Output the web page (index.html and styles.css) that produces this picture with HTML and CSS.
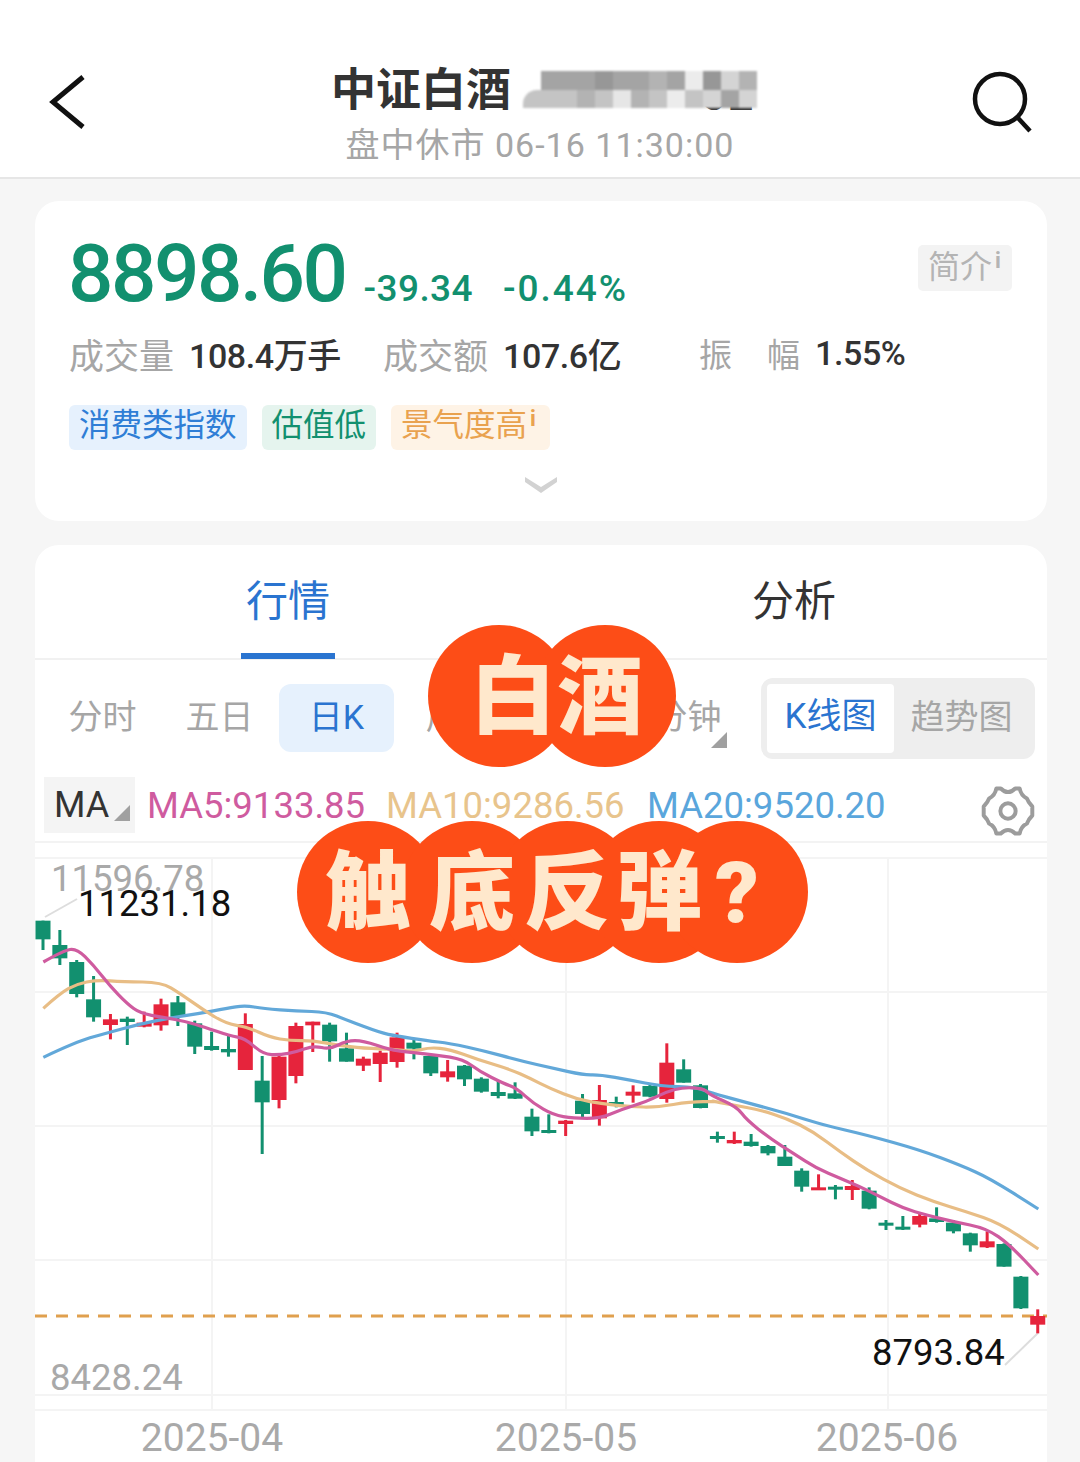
FILE: index.html
```html
<!DOCTYPE html>
<html lang="zh-CN">
<head>
    <meta charset="UTF-8">
    <meta name="viewport" content="width=device-width, initial-scale=1.0">
    <title>中证白酒</title>
    <link rel="icon" href="data:,">
    <link rel="stylesheet" href="styles.css">
</head>
<body>
    <div class="page">
        <header class="topbar">
            <svg class="icon-back" viewBox="0 0 40 60" width="40" height="60">
                <path d="M35 5 L5 30 L35 55" fill="none" stroke="#111" stroke-width="5"/>
            </svg>
            <div class="topbar-title">
                <div class="title-row">
                    <span class="title-name">中证白酒</span>
                    <span class="title-code">
                        <span class="title-code-tail">52</span>
                        <span class="mosaic">
                            <i class="m-none"></i><i class="s4"></i><i class="s4"></i><i class="s4"></i><i class="s3"></i><i class="s4"></i><i class="s4"></i><i class="s5"></i><i class="s4"></i><i class="s9"></i><i class="s3"></i><i class="s7"></i><i class="s5"></i>
                            <i class="s6 m-first"></i><i class="s6"></i><i class="s6"></i><i class="s5"></i><i class="s6"></i><i class="s8"></i><i class="s5"></i><i class="s6"></i><i class="s9"></i><i class="s6"></i><i class="s7"></i><i class="s4"></i><i class="s7"></i>
                        </span>
                    </span>
                </div>
                <div class="title-sub">盘中休市 06-16 11:30:00</div>
            </div>
            <svg class="icon-search" viewBox="0 0 60 64" width="60" height="64">
                <circle cx="28" cy="28" r="25" fill="none" stroke="#111" stroke-width="4.5"/>
                <path d="M46 47 L58 60" stroke="#111" stroke-width="4.5" fill="none"/>
            </svg>
        </header>

        <main class="content">
            <section class="card quote">
                <div class="quote-price">
                    <span class="price">8898.60</span>
                    <span class="change">-39.34</span>
                    <span class="change change-pct">-0.44%</span>
                    <span class="intro">简介<sup>i</sup></span>
                </div>
                <div class="stats">
                    <span class="stat-label">成交量</span><span class="stat-value v-volume">108.4万手</span>
                    <span class="stat-label">成交额</span><span class="stat-value v-amount">107.6亿</span>
                    <span class="stat-label stat-wide"><b>振</b><b>幅</b></span><span class="stat-value">1.55%</span>
                </div>
                <div class="tags">
                    <span class="tag tag-blue">消费类指数</span>
                    <span class="tag tag-green">估值低</span>
                    <span class="tag tag-orange">景气度高<sup>i</sup></span>
                </div>
                <svg class="chevron" viewBox="0 0 36 20" width="36" height="20">
                    <path d="M2 2 L18 12 L34 2 L34 7 L18 18 L2 7 Z" fill="#d2d2d2"/>
                </svg>
            </section>

            <section class="card market">
                <nav class="tabs">
                    <div class="tab tab-active">行情</div>
                    <div class="tab">分析</div>
                </nav>
                <div class="periods">
                    <div class="period-list">
                        <span class="period">分时</span>
                        <span class="period">五日</span>
                        <span class="period period-active">日K</span>
                        <span class="period">周K</span>
                        <span class="period">月K</span>
                        <span class="period period-more">分钟<i class="corner"></i></span>
                    </div>
                    <div class="toggle">
                        <span class="toggle-item toggle-active">K线图</span>
                        <span class="toggle-item">趋势图</span>
                    </div>
                </div>
                <div class="ma-row">
                    <span class="ma-box">MA<i class="corner"></i></span>
                    <span class="ma ma5">MA5:9133.85</span>
                    <span class="ma ma10">MA10:9286.56</span>
                    <span class="ma ma20">MA20:9520.20</span>
                    <svg class="icon-gear" viewBox="-30 -30 60 60" width="54" height="54">
                        <path d="M27 -5 L27 5 C24 8 22 11 21 14 C17 16 14 19 13 25 L8 25 C5 22 3 21 0 21 C-3 21 -5 22 -8 25 L-13 25 C-14 19 -17 16 -21 14 C-22 11 -24 8 -27 5 L-27 -5 C-24 -8 -22 -11 -21 -14 C-17 -16 -14 -19 -13 -25 L-8 -25 C-5 -22 -3 -21 0 -21 C3 -21 5 -22 8 -25 L13 -25 C14 -19 17 -16 21 -14 C22 -11 24 -8 27 -5 Z" fill="none" stroke="#9c9c9c" stroke-width="4.4" stroke-linejoin="round"/>
                        <circle r="8.5" fill="none" stroke="#9c9c9c" stroke-width="4.4"/>
                    </svg>
                </div>
                <!-- viewBox uses page coordinates, candles are added by chart.js -->
                <svg id="chart" class="chart" viewBox="35 843 1012 619" width="1012" height="619">
                    <g class="grid">
                        <path d="M35 858 H1047 M35 992 H1047 M35 1126 H1047 M35 1260 H1047 M35 1395 H1047 M35 1410 H1047"/>
                        <path d="M212 858 V1410 M566 858 V1410 M888 858 V1410"/>
                    </g>
                    <text class="axis-label" x="51" y="891">11596.78</text>
                    <text class="axis-label" x="50" y="1390">8428.24</text>
                    <path class="leader" d="M45 917 L77 899"/>
                    <path class="leader" d="M1005 1365 L1038 1333"/>
                    <path class="last-line" d="M35 1316 H1047"/>
                    <g id="candles"></g>
                    <g id="lines"></g>
                    <text class="peak-label" x="78" y="916">11231.18</text>
                    <text class="peak-label" x="872" y="1365">8793.84</text>
                    <text class="date-label" x="212" y="1451">2025-04</text>
                    <text class="date-label" x="566" y="1451">2025-05</text>
                    <text class="date-label" x="887" y="1451">2025-06</text>
                </svg>
            </section>
        </main>

        <div class="bubble bubble-top"><span>白</span><span>酒</span></div>
        <div class="bubble bubble-bottom"><span>触</span><span>底</span><span>反</span><span>弹</span><span>?</span></div>
    </div>

    <script src="chart.js"></script>
</body>
</html>
```

FILE: styles.css
```css
:root {
    --green: #12906f;
    --blue: #2a74d0;
    --gray-text: #a6a6a6;
    --dark-text: #333333;
    --font: Roboto, "Noto Sans CJK SC", sans-serif;
}

* {
    margin: 0;
    padding: 0;
    box-sizing: border-box;
}

html, body {
    height: 1462px;
    overflow: hidden;
}

body {
    font-family: var(--font);
    background-color: #f6f6f6;
    color: var(--dark-text);
}

.page {
    position: relative;
    height: 1462px;
    overflow: hidden;
}

/* top bar */
.topbar {
    height: 179px;
    background-color: #fff;
    border-bottom: 2px solid #e6e6e6;
    padding: 64px 48px 0 48px;
    display: flex;
    justify-content: space-between;
}

.icon-back {
    margin-top: 8px;
    margin-right: 20px;
}

.icon-search {
    margin-top: 7px;
}

.topbar-title {
    display: flex;
    flex-direction: column;
    align-items: center;
}

.title-row {
    display: flex;
    align-items: center;
    height: 54px;
    margin-left: 26px;
    gap: 12px;
}

.title-name {
    font-size: 45px;
    font-weight: 700;
    line-height: 54px;
    color: #333;
}

.title-code {
    position: relative;
    width: 252px;
    height: 54px;
}

.title-code-tail {
    position: absolute;
    left: 178px;
    top: 4px;
    font-size: 44px;
    font-weight: 700;
    line-height: 54px;
    letter-spacing: 2px;
}

.mosaic {
    position: absolute;
    left: 0;
    top: 7px;
    display: grid;
    grid-template-columns: repeat(13, 18px);
    grid-auto-rows: 18.5px;
    filter: blur(0.8px);
}

.m-first { border-top-left-radius: 14px; }

.s3 { background: #979797; }
.s4 { background: #a4a4a4; }
.s5 { background: #b3b3b3; }
.s6 { background: #c4c4c4; }
.s7 { background: #d4d4d4; }
.s8 { background: #e6e6e6; }
.s9 { background: #ececec; }

.title-sub {
    font-size: 34px;
    line-height: 50px;
    margin-top: 2px;
    letter-spacing: 1px;
    color: var(--gray-text);
}

/* cards */
.content {
    padding: 22px 33px 0 35px;
    display: flex;
    flex-direction: column;
    gap: 24px;
}

.card {
    background-color: #fff;
    border-radius: 24px;
}

.quote {
    position: relative;
    height: 320px;
    padding: 34px 35px 0 34px;
}

.quote-price {
    display: flex;
    align-items: flex-start;
    height: 82px;
    color: var(--green);
}

.price {
    font-size: 80px;
    font-weight: 500;
    line-height: 78px;
    letter-spacing: -2.5px;
    margin-left: -1px;
}

.change {
    font-size: 37px;
    font-weight: 500;
    line-height: 36px;
    margin-top: 36px;
    margin-left: 18px;
    letter-spacing: 0.4px;
}

.change-pct {
    margin-left: 30px;
    letter-spacing: 2px;
}

.intro {
    margin-left: auto;
    margin-top: 10px;
    width: 94px;
    height: 46px;
    background-color: #f3f3f3;
    border-radius: 5px;
    font-size: 32px;
    line-height: 44px;
    color: #b4b4b4;
    padding-left: 10px;
    white-space: nowrap;
}

sup {
    font-size: 22px;
    font-weight: 700;
    line-height: 0;
    vertical-align: 10px;
    margin-left: 3px;
}

.stats {
    display: flex;
    align-items: center;
    height: 48px;
    margin-top: 12px;
}

.stat-label {
    font-size: 35px;
    color: var(--gray-text);
    white-space: nowrap;
}

.stat-value {
    font-size: 34px;
    font-weight: 500;
    color: var(--dark-text);
    margin-left: 15px;
    letter-spacing: -0.4px;
    white-space: nowrap;
}

.v-volume {
    width: 194px;
}

.v-amount {
    width: 196px;
}

.stat-wide {
    width: 101px;
    display: flex;
    justify-content: space-between;
}

.stat-wide b {
    font-weight: 400;
    font-size: 33px;
}

.tags {
    display: flex;
    gap: 15px;
    margin-top: 28px;
}

.tag {
    height: 45px;
    padding: 0 10px;
    border-radius: 6px;
    font-size: 31.5px;
    line-height: 41px;
    white-space: nowrap;
}

.tag-blue {
    background-color: #e6f1fd;
    color: #2f7ed6;
}

.tag-green {
    background-color: #e5f4ee;
    color: var(--green);
}

.tag-orange {
    background-color: #fef3e6;
    color: #e9a24f;
    padding-right: 14px;
}

.tag sup {
    font-size: 22px;
    vertical-align: 10px;
}

.chevron {
    position: absolute;
    left: 488px;
    top: 274px;
}

.market {
    height: 960px;
    overflow: hidden;
}

/* 行情 / 分析 tabs */
.tabs {
    display: grid;
    grid-template-columns: 1fr 1fr;
    height: 115px;
    border-bottom: 2px solid #f1f1f1;
}

.tab {
    text-align: center;
    font-size: 42px;
    line-height: 114px;
    position: relative;
}

.tab-active {
    color: var(--blue);
}

.tab-active::after {
    content: "";
    position: absolute;
    left: 206px;
    bottom: 0;
    width: 94px;
    height: 6px;
    background-color: var(--blue);
}

/* period row */
.periods {
    display: flex;
    align-items: center;
    justify-content: space-between;
    height: 116px;
    padding: 0 12px 0 10px;
}

.period-list {
    display: flex;
}

.period {
    position: relative;
    width: 115px;
    margin-right: 2px;
    height: 68px;
    border-radius: 12px;
    text-align: center;
    font-size: 34px;
    line-height: 66px;
    color: var(--gray-text);
}

.period-active {
    background-color: #e6f1fd;
    color: var(--blue);
}

.corner {
    display: block;
    width: 0;
    height: 0;
    border-style: solid;
    border-width: 0 0 16px 16px;
    border-color: transparent transparent #a0a0a0 transparent;
}

.period-more .corner {
    position: absolute;
    right: 18px;
    bottom: 4px;
}

.toggle {
    display: flex;
    width: 274px;
    height: 81px;
    padding: 6px;
    background-color: #eeeeee;
    border-radius: 12px;
}

.toggle-item {
    flex: 1;
    text-align: center;
    font-size: 34px;
    line-height: 66px;
    color: var(--gray-text);
}

.toggle-active {
    flex: 0 0 127px;
    background-color: #fff;
    border-radius: 4px;
    color: var(--blue);
    font-size: 35px;
}

/* MA row */
.ma-row {
    display: flex;
    align-items: center;
    height: 67px;
    padding-left: 9px;
    border-bottom: 2px solid #f3f3f3;
}

.ma-box {
    display: flex;
    align-items: center;
    width: 91px;
    height: 56px;
    margin-top: -7px;
    padding-left: 10px;
    background-color: #f4f4f4;
    font-size: 36px;
    line-height: 56px;
    color: var(--dark-text);
}

.ma-box .corner {
    align-self: flex-end;
    margin-left: 5px;
    margin-bottom: 12px;
}

.ma {
    font-size: 36.5px;
    line-height: 56px;
    margin-top: -5px;
    white-space: nowrap;
}

.ma5 {
    margin-left: 12px;
    width: 239px;
    color: #cf5b9f;
}

.ma10 {
    width: 261px;
    color: #e8c48c;
}

.ma20 {
    color: #5aa6dc;
}

.icon-gear {
    margin-left: auto;
    margin-right: 12px;
    margin-top: 4px;
}

/* chart */
.chart {
    display: block;
    font-family: var(--font);
}

.grid path {
    fill: none;
    stroke: #f4f4f4;
    stroke-width: 2;
}

.axis-label {
    font-size: 36.5px;
    fill: #a9a9a9;
}

.peak-label {
    font-size: 36.5px;
    fill: #111;
}

.date-label {
    font-size: 39px;
    fill: #a9a9a9;
    text-anchor: middle;
}

.leader {
    fill: none;
    stroke: #dddddd;
    stroke-width: 2;
}

.last-line {
    fill: none;
    stroke: #e0a04e;
    stroke-width: 3;
    stroke-dasharray: 12 9;
}

/* headline bubbles over the chart, circles sit behind all the letters */
.bubble {
    position: absolute;
    display: flex;
    height: 142px;
    isolation: isolate;
    color: #ffe8cc;
    font-size: 86px;
    font-weight: 900;
}

.bubble span {
    position: relative;
    flex: 0 0 142px;
    height: 142px;
    padding-top: 4px;
    display: flex;
    align-items: center;
    justify-content: center;
    line-height: 1;
}

.bubble span::before {
    content: "";
    position: absolute;
    inset: 0;
    z-index: -1;
    border-radius: 50%;
    background-color: #fd4d17;
}

.bubble-top {
    left: 428px;
    top: 625px;
}

.bubble-top span + span {
    margin-left: -36px;
}

.bubble-top span:first-child {
    padding-left: 28px;
}

.bubble-top span:last-child {
    padding-right: 10px;
}

.bubble-bottom {
    left: 297px;
    top: 821px;
}

.bubble-bottom span:nth-child(2) { margin-left: -38px; }
.bubble-bottom span:nth-child(3) { margin-left: -47px; }
.bubble-bottom span:nth-child(4) { margin-left: -50px; }
.bubble-bottom span:nth-child(5) { margin-left: -64px; }
```

FILE: chart.js
```js
// Daily candles: [up?, wickTop, bodyTop, bodyBottom, wickBottom], y in page pixels
const SVG_NS = 'http://www.w3.org/2000/svg';
const GREEN = '#12906f';
const RED = '#e6243c';

// measured from 3x crops, converted below
const part1 = [
    [0,62,62,118,150],[0,90,135,175,195],[0,180,186,282,292],[0,228,298,352,365],
    [1,342,358,375,418],[0,350,356,366,435],[1,335,368,380,382],[1,296,313,376,392],
    [0,288,307,350,378],[0,362,370,440,462],[0,395,438,450,452],[0,408,447,457,470],
    [1,340,372,510,510],[0,468,542,607,762],[1,465,470,600,625],[1,368,378,528,550],
    [1,365,365,376,456],[0,368,374,424,485],[0,398,445,485,485],[1,470,476,497,513],
    [1,452,458,492,546],[1,398,412,486,503]
].map(c => scale(c, 900));

const part2 = [
    [0,118,128,146,178],[0,165,168,220,228],[1,180,214,232,245],[0,195,197,238,258],
    [0,232,236,275,278],[0,240,276,288,295],[0,247,280,296,297],[0,326,350,394,408],
    [0,343,390,399,400],[1,360,362,372,408],[0,282,302,342,352],[1,255,300,355,377],
    [0,290,306,316,322],[1,256,275,287,308],[0,255,258,290,292],[1,130,188,297,308],
    [0,178,208,248,248],[0,252,256,324,325]
].map(c => scale(c, 1000));

const part3 = [
    [0,125,138,146,158],[1,125,150,160,162],[0,132,155,168,170],[0,165,168,190,196],
    [0,165,200,228,228],[0,235,242,290,305],[1,253,292,300,300],[0,285,290,298,328],
    [1,270,288,300,330],[0,292,302,356,358],[0,390,398,406,420],[0,378,410,418,420],
    [1,370,378,404,412],[0,352,385,396,398],[0,390,398,424,430],[0,428,430,466,485],
    [1,424,454,472,474],[0,460,462,530,530],[0,558,560,655,657],[1,658,678,704,730]
].map(c => scale(c, 1090));

function scale(c, top) {
    return [c[0]].concat(c.slice(1).map(v => top + v / 3));
}

const candles = part1.concat(part2, part3);

function el(name, attrs) {
    const node = document.createElementNS(SVG_NS, name);
    for (const key in attrs) node.setAttribute(key, attrs[key]);
    return node;
}

const candleGroup = document.getElementById('candles');
candles.forEach(function (c, i) {
    const x = 43 + i * 16.86;
    const color = c[0] ? RED : GREEN;
    candleGroup.appendChild(el('rect', { x: x - 1.5, y: c[1], width: 3, height: Math.max(c[4] - c[1], 3), fill: color }));
    candleGroup.appendChild(el('rect', { x: x - 7.5, y: c[2], width: 15, height: Math.max(c[3] - c[2], 3), fill: color }));
});

// moving averages, again as crop coordinates per section
function pts(list, ox, oy) {
    return list.map(p => [ox + p[0] / 3, oy + p[1] / 3]);
}

const ma5 = [].concat(
    pts([[40,186],[100,152],[140,145],[190,195],[240,258],[290,310],[330,340],[400,352],[470,365],[520,380],[600,408],[645,415],[700,463],[750,465],[800,455],[850,437],[900,448],[950,422],[1000,422]], 30, 900),
    pts([[60,150],[130,158],[200,165],[280,178],[330,215],[400,250],[440,265],[490,310],[550,345],[610,355],[690,355],[750,330],[830,305],[890,275],[940,262],[1000,265]], 370, 1000),
    pts([[30,15],[110,50],[140,90],[210,145],[280,190],[350,235],[420,265],[480,290],[540,320],[610,355],[680,375],[760,395],[860,415],[930,465],[1015,555]], 700, 1090)
);

const ma10 = [].concat(
    pts([[40,325],[90,280],[140,252],[200,240],[280,245],[395,247],[450,280],[520,330],[590,372],[650,380],[720,412],[780,422],[850,422],[920,435],[1000,445]], 30, 900),
    pts([[80,148],[130,155],[180,142],[240,148],[320,178],[420,208],[480,235],[540,265],[620,298],[700,312],[780,320],[860,322],[960,305],[1040,305]], 370, 1000),
    pts([[30,32],[100,45],[180,60],[260,85],[340,125],[420,185],[500,240],[600,295],[700,335],[800,365],[900,400],[1015,477]], 700, 1090)
);

const ma20 = [].concat(
    pts([[40,472],[140,425],[220,402],[330,372],[430,352],[510,340],[590,325],[645,316],[700,326],[800,333],[890,336],[950,360],[1050,398]], 30, 900),
    pts([[80,108],[170,122],[240,130],[340,152],[450,182],[550,205],[640,225],[690,224],[780,240],[870,258],[980,262]], 370, 1000),
    pts([[30,8],[130,35],[260,70],[370,105],[500,135],[660,180],[780,225],[870,265],[1015,357]], 700, 1090)
);

// smooth through midpoints so the lines don't look jagged
function smooth(points) {
    let d = 'M' + points[0][0] + ' ' + points[0][1];
    for (let i = 1; i < points.length - 1; i++) {
        const mx = (points[i][0] + points[i + 1][0]) / 2;
        const my = (points[i][1] + points[i + 1][1]) / 2;
        d += ' Q' + points[i][0] + ' ' + points[i][1] + ' ' + mx + ' ' + my;
    }
    const last = points[points.length - 1];
    return d + ' L' + last[0] + ' ' + last[1];
}

const lineGroup = document.getElementById('lines');
[[ma20, '#62a8d9'], [ma10, '#e8bd85'], [ma5, '#cf5b9f']].forEach(function (line) {
    lineGroup.appendChild(el('path', { d: smooth(line[0]), fill: 'none', stroke: line[1], 'stroke-width': 3.2, 'stroke-linejoin': 'round' }));
});
```
